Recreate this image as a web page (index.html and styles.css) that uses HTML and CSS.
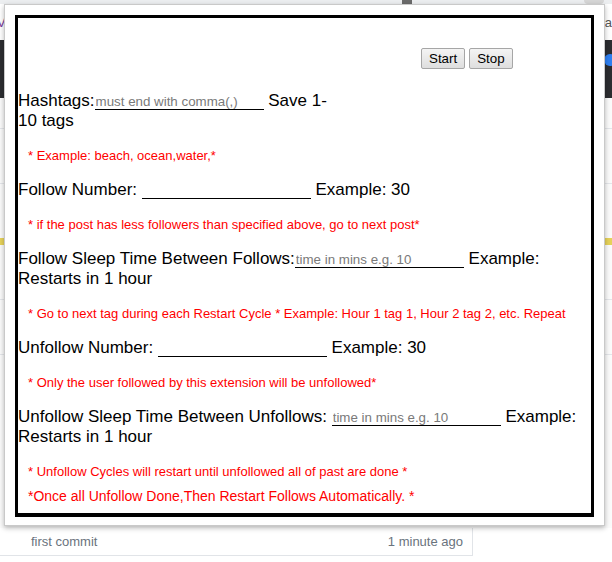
FILE: index.html
```html
<!DOCTYPE html>
<html>
<head>
<meta charset="utf-8">
<link rel="stylesheet" href="styles.css">
</head>
<body>
<div class="page">
  <div class="tabstrip">
    <span class="tab-icon"></span>
    <span class="tab-circle"></span>
  </div>
  <div class="addr">
    <span class="addr-left">V</span>
    <span class="addr-right">ea</span>
  </div>
  <div class="darkbar">
    <span class="blue-dot"></span>
  </div>
  <div class="content">
    <div class="row"></div>
    <div class="row"></div>
    <div class="row mark"></div>
    <div class="row"></div>
    <div class="row"></div>
  </div>
  <div class="commit-row">
    <div class="commit-main">
      <span class="commit-msg">first commit</span>
      <span class="commit-time">1 minute ago</span>
    </div>
    <div class="commit-side"></div>
  </div>
</div>

<div class="popup">
  <div class="box">
    <div class="controls">
      <button class="btn">Start</button>
      <button class="btn">Stop</button>
    </div>
    <div class="line">Hashtags:<input class="field" type="text" placeholder="must end with comma(,)"> Save 1-<br>10 tags</div>
    <p class="note">* Example: beach, ocean,water,*</p>
    <div class="line">Follow Number: <input class="field" type="text"> Example: 30</div>
    <p class="note">* if the post has less followers than specified above, go to next post*</p>
    <div class="line">Follow Sleep Time Between Follows:<input class="field" type="text" placeholder="time in mins e.g. 10"> Example: Restarts in 1 hour</div>
    <p class="note">* Go to next tag during each Restart Cycle * Example: Hour 1 tag 1, Hour 2 tag 2, etc. Repeat</p>
    <div class="line">Unfollow Number: <input class="field" type="text"> Example: 30</div>
    <p class="note">* Only the user followed by this extension will be unfollowed*</p>
    <div class="line">Unfollow Sleep Time Between Unfollows: <input class="field" type="text" placeholder="time in mins e.g. 10"> Example: Restarts in 1 hour</div>
    <p class="note last-pair">* Unfollow Cycles will restart until unfollowed all of past are done *</p>
    <p class="note big">*Once all Unfollow Done,Then Restart Follows Automatically. *</p>
  </div>
</div>
</body>
</html>
```

FILE: styles.css
```css
html, body {
  margin: 0;
  padding: 0;
}
body {
  width: 612px;
  height: 562px;
  overflow: hidden;
  position: relative;
  background: #ffffff;
  font-family: "Liberation Sans", Arial, sans-serif;
}

/* ---------- background page ---------- */
.page {
  display: flex;
  flex-direction: column;
  height: 562px;
}
.tabstrip {
  height: 4px;
  background: #eceef0;
  display: flex;
  align-items: flex-start;
}
.tab-icon {
  width: 10px;
  height: 4px;
  margin-left: 402px;
  background: #6b6b6b;
}
.tab-circle {
  width: 20px;
  height: 4px;
  margin-left: 172px;
  background: #d6d6d6;
  border-radius: 0 0 10px 10px;
}
.addr {
  height: 36px;
  background: #ffffff;
  display: flex;
  justify-content: space-between;
  align-items: center;
  font-size: 13px;
  color: #555;
}
.addr-left {
  color: #7b3d9b;
  margin-left: -3px;
}
.darkbar {
  height: 58px;
  background: #2c2d30;
  display: flex;
  justify-content: flex-end;
  align-items: flex-start;
}
.blue-dot {
  width: 12px;
  height: 12px;
  border-radius: 50%;
  background: #2f7ff0;
  margin-top: 14px;
  margin-right: -4px;
}
.content {
  height: 430px;
  background: #fbfbfb;
  display: flex;
  flex-direction: column;
  gap: 54px;
  padding-top: 30px;
  box-sizing: border-box;
}
.row {
  height: 0;
  border-top: 1px solid #e4e6ea;
}
.row.mark {
  border-top: 7px solid #e6d25a;
}
.commit-row {
  display: flex;
  height: 34px;
}
.commit-main {
  width: 473px;
  height: 28px;
  box-sizing: border-box;
  border-right: 1px solid #e1e4e8;
  border-bottom: 1px solid #e1e4e8;
  display: flex;
  justify-content: space-between;
  align-items: center;
  padding: 0 9px 0 31px;
  font-size: 13px;
  color: #6a737d;
}
.commit-side {
  flex: 1;
}

/* ---------- popup ---------- */
.popup {
  position: absolute;
  left: 4px;
  top: 4px;
  width: 601px;
  box-sizing: border-box;
  padding: 10px 10px 8px;
  background: #ffffff;
  border: 1px solid #c9c9c9;
  box-shadow: 0 2px 5px rgba(0, 0, 0, 0.28);
}
.box {
  height: 502px;
  box-sizing: border-box;
  border: 3px solid #000;
  border-bottom-width: 4px;
  color: #000;
  font-size: 17px;
  line-height: 20px;
}
.controls {
  display: flex;
  gap: 4px;
  padding-left: 403px;
  margin-top: 30px;
  margin-bottom: 22px;
}
.btn {
  height: 21px;
  padding: 0 7px;
  font-family: "Liberation Sans", Arial, sans-serif;
  font-size: 13.33px;
  color: #000;
  background: linear-gradient(#f4f4f4, #dedede);
  border: 1px solid #a6a6a6;
  border-radius: 2px;
}
.line {
  margin: 0;
}
.field {
  width: 169px;
  box-sizing: border-box;
  border: none;
  border-bottom: 1px solid #000;
  padding: 0 1px;
  margin: 0;
  font-family: "Liberation Sans", Arial, sans-serif;
  font-size: 13.33px;
  line-height: 15px;
  height: 16px;
  vertical-align: baseline;
  outline: none;
  background: transparent;
}
.field::placeholder {
  color: #7a7a7a;
}
.note {
  margin: 17px 0;
  padding-left: 10px;
  color: #ff0000;
  font-size: 13px;
  line-height: 15px;
}
.note.last-pair {
  margin-bottom: 9px;
}
.note.big {
  margin-top: 9px;
  margin-bottom: 0;
  font-size: 14px;
  line-height: 16px;
}
```
